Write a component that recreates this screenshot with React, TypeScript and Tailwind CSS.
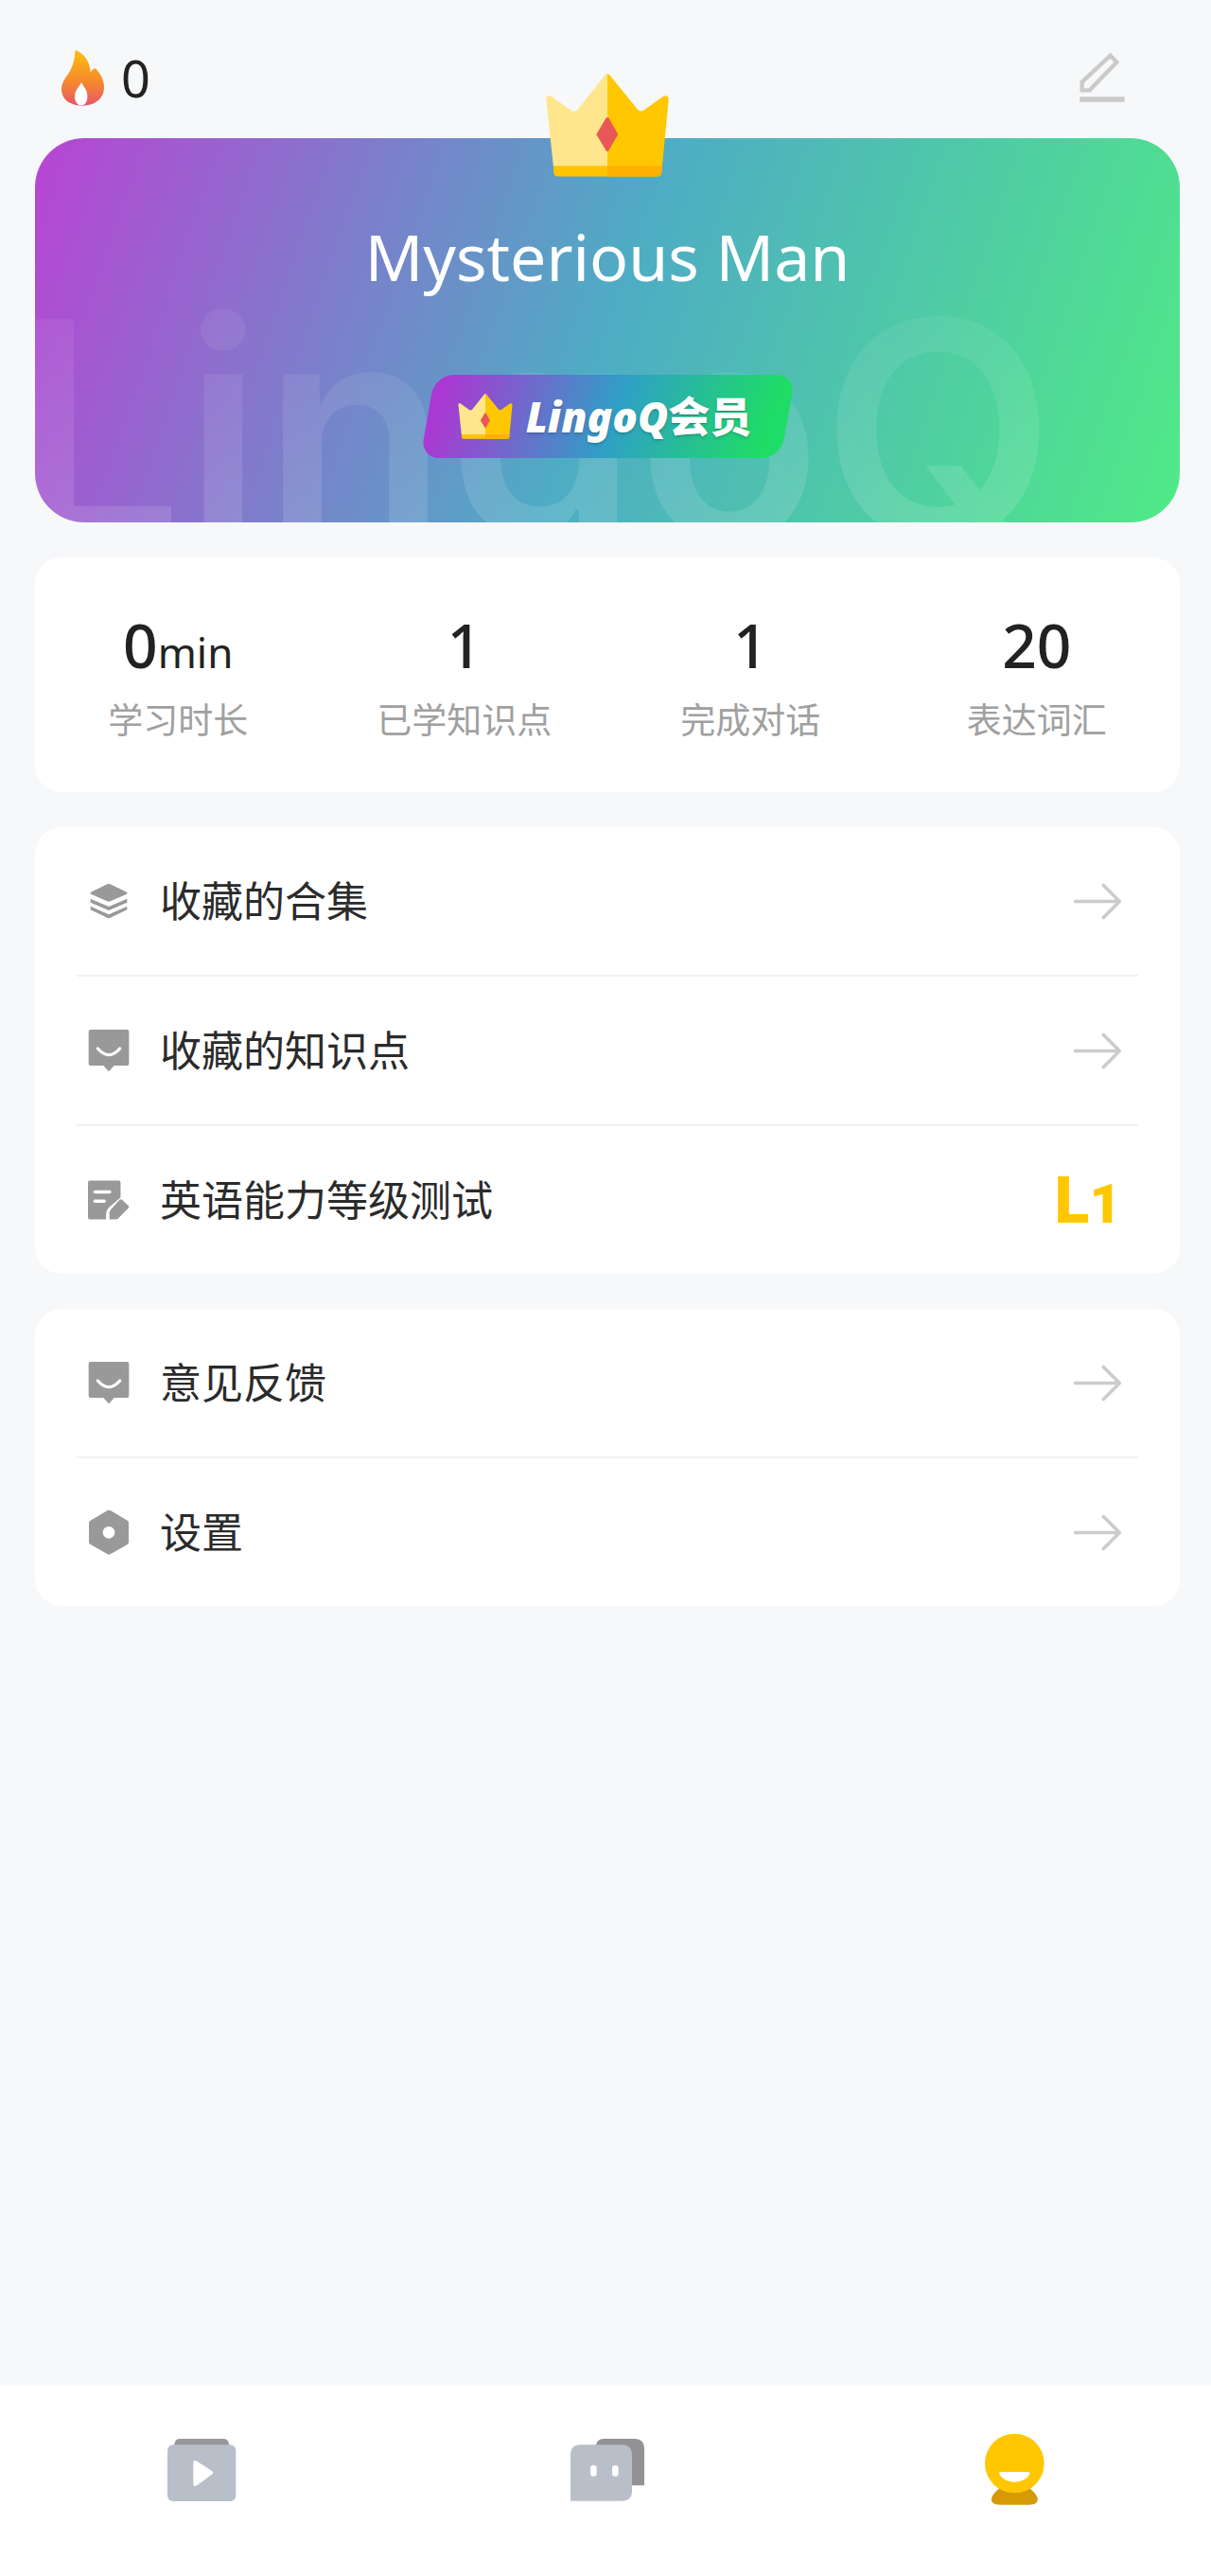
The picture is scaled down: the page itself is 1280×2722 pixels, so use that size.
import React, { useState } from 'react';

interface IconProps {
  className?: string;
}

interface Stat {
  label: string;
  value: number;
  unit?: string;
}

interface MenuItem {
  label: string;
  icon: React.FC<IconProps>;
  level?: number;
}

const FlameIcon = ({ className }: IconProps) => (
  <svg viewBox="195 66 135 177" className={className} aria-hidden="true">
    <defs>
      <linearGradient id="flame" x1="0" y1="0" x2="0" y2="1">
        <stop offset="0.1" stopColor="#fdb713" />
        <stop offset="0.55" stopColor="#f58a2c" />
        <stop offset="1" stopColor="#e8566a" />
      </linearGradient>
    </defs>
    <path
      fill="url(#flame)"
      d="M238 68Q240 65 246 68C268 80 286 104 287 136C291 129 297 124 303 124C320 142 330 162 330 184C330 220 300 242 262 242C224 242 195 224 195 190C195 165 212 150 222 132C233 112 237 92 238 68Z"
    />
    <path fill="#fff" d="M258 168C264 180 277 192 277 212C277 230 269 241 258 241C245 241 237 228 237 212C237 192 252 182 258 168Z" />
  </svg>
);

const EditIcon = ({ className }: IconProps) => (
  <svg viewBox="184 80 150 162" className={className} fill="none" aria-hidden="true">
    <path d="M285 91L305 112L219 201H195V175Z" stroke="#cacaca" strokeWidth="13" />
    <path d="M188 230H330" stroke="#cacaca" strokeWidth="16" />
  </svg>
);

const CrownIcon = ({ className }: IconProps) => (
  <svg viewBox="107 54 392 328" className={className} aria-hidden="true">
    <path
      fill="#ffc700"
      d="M303 54Q308 54 312 60L400 168Q410 177 421 168L480 126Q498 118 498 136L476 366Q475 381 462 381H303Z"
    />
    <path fill="#ffe68c" d="M303 54Q298 54 294 60L208 168Q196 179 184 168L122 124Q108 119 108 134L131 350H303Z" />
    <path fill="#ffc400" d="M131 347H303V381H146Q132 381 132 368Z" />
    <path fill="#ffb000" d="M303 347H478L476 368Q474 381 462 381H303Z" />
    <path fill="#ea5757" d="M299 194Q303 190 307 194L337 247L307 299Q303 303 299 299L268 247Z" />
  </svg>
);

const LayersIcon = ({ className }: IconProps) => (
  <svg viewBox="100 88 132 132" className={className} fill="#999" aria-hidden="true">
    <path d="M161 101Q166 99 171 101L223 126Q226 129 223 132L171 155Q166 157 161 155L109 132Q106 129 109 126Z" />
    <path d="M108 147L166 172L224 147V159L166 184L108 159Z" />
    <path d="M108 171L166 197L224 171V182L171 207Q166 210 161 207L108 182Z" />
  </svg>
);

const CommentIcon = ({ className }: IconProps) => (
  <svg viewBox="100 565 132 132" className={className} aria-hidden="true">
    <path fill="#999" d="M108 565H224Q230 565 230 571V673Q230 679 224 679H183L169 695Q166 698 163 695L149 679H108Q102 679 102 673V571Q102 565 108 565Z" />
    <path d="M131 625Q166 665 201 625" stroke="#fff" strokeWidth="10" strokeLinecap="round" fill="none" />
  </svg>
);

const TestIcon = ({ className }: IconProps) => (
  <svg viewBox="108 1036 138 132" className={className} aria-hidden="true">
    <path fill="#999" d="M114 1038H210Q216 1038 216 1044V1094L178 1126Q168 1136 168 1150V1166H114Q108 1166 108 1160V1044Q108 1038 114 1038Z" />
    <path fill="#999" d="M213 1101Q217 1098 221 1101L242 1121Q245 1125 242 1129L209 1162Q205 1166 200 1166H179V1145Q179 1138 184 1133Z" />
    <path d="M131 1075H180M131 1106H162" stroke="#fff" strokeWidth="11" strokeLinecap="round" />
  </svg>
);

const SettingsIcon = ({ className }: IconProps) => (
  <svg viewBox="99 680 132 132" className={className} overflow="visible" aria-hidden="true">
    <path
      fill="#999"
      fillRule="evenodd"
      d="M161 677Q165 675 170 677L224 709Q228 712 228 716V778Q228 782 224 785L170 816Q165 818 161 816L107 785Q102 782 102 778V716Q102 712 107 709ZM165 728A19 19 0 1 0 165 766A19 19 0 1 0 165 728Z"
    />
  </svg>
);

const ArrowIcon = ({ className }: IconProps) => (
  <svg viewBox="224 92 150 122" className={className} fill="none" aria-hidden="true">
    <path d="M229 153H368M318 102L369 153L318 204" stroke="#ccc" strokeWidth="11" strokeLinecap="round" strokeLinejoin="round" />
  </svg>
);

const VideoTabIcon = ({ className }: IconProps) => (
  <svg viewBox="98 210 246 234" className={className} aria-hidden="true">
    <path fill="#97979c" d="M152 231H290Q303 231 307 243L310 262H132L136 243Q140 231 152 231Z" />
    <rect x="113" y="250" width="217" height="179" rx="18" fill="#b9bfc9" />
    <path fill="#fff" d="M195 306Q196 298 204 301L254 333Q261 338 254 344L204 380Q196 384 195 376Z" />
  </svg>
);

const ChatTabIcon = ({ className }: IconProps) => (
  <svg viewBox="118 210 246 234" className={className} aria-hidden="true">
    <path fill="#919196" d="M236 231H332Q364 231 364 264V379H209V258Q212 231 236 231Z" />
    <path fill="#b9bfc9" d="M162 250H292Q325 250 325 283V396Q325 428 292 428H130V283Q130 250 162 250Z" />
    <rect x="193" y="315" width="20" height="35" rx="9" fill="#fff" />
    <rect x="262" y="315" width="20" height="35" rx="9" fill="#fff" />
  </svg>
);

const ProfileTabIcon = ({ className }: IconProps) => (
  <svg viewBox="78 210 246 234" className={className} aria-hidden="true">
    <path fill="#d69a04" d="M170 388H264Q282 400 290 419Q293 440 264 440H170Q141 440 144 419Q152 400 170 388Z" />
    <circle cx="217" cy="309" r="94" fill="#ffc700" />
    <path fill="#fff" d="M173 336H261Q267 336 265 342C258 358 240 368 217 368C194 368 176 358 169 342Q167 336 173 336Z" />
  </svg>
);

const stats: Stat[] = [
  { label: '学习时长', value: 0, unit: 'min' },
  { label: '已学知识点', value: 1 },
  { label: '完成对话', value: 1 },
  { label: '表达词汇', value: 20 },
];

const menuGroups: MenuItem[][] = [
  [
    { label: '收藏的合集', icon: LayersIcon },
    { label: '收藏的知识点', icon: CommentIcon },
    { label: '英语能力等级测试', icon: TestIcon, level: 1 },
  ],
  [
    { label: '意见反馈', icon: CommentIcon },
    { label: '设置', icon: SettingsIcon },
  ],
];

const tabs = [
  { id: 'video', label: '视频', icon: VideoTabIcon },
  { id: 'chat', label: '对话', icon: ChatTabIcon },
  { id: 'profile', label: '我的', icon: ProfileTabIcon },
];

const MemberBanner = () => (
  <section className="relative">
    <div className="relative flex h-[406px] flex-col items-center overflow-hidden rounded-[52px] bg-[linear-gradient(109deg,#b844d4_0%,#4eacc4_50%,#50ea86_100%)]">
      <span
        aria-hidden="true"
        className="absolute top-37 -left-6 bg-linear-to-b from-white/5 to-white/15 bg-clip-text font-['Inter',sans-serif] text-[320px] leading-[320px] font-semibold whitespace-nowrap text-transparent"
      >
        LingoQ
      </span>
      <h1 className="relative mt-20 text-[68px] leading-[90px] text-white">Mysterious Man</h1>
      <button type="button" className="relative mt-20 flex h-[88px] items-center gap-3.5 pr-[42px] pl-9">
        <span className="absolute inset-x-1 inset-y-0 -skew-x-[10deg] rounded-[20px] bg-[linear-gradient(100deg,#aa38d2_4%,#2fa0c6_52%,#1fdc66_94%)]" />
        <CrownIcon className="relative h-12 w-[58px]" />
        <span className="relative text-[44px] leading-[48px] font-black text-white text-shadow-md">
          <i>LingoQ</i>会员
        </span>
      </button>
    </div>
    <CrownIcon className="absolute -top-[68px] left-1/2 h-[109px] w-[130px] -translate-x-1/2" />
  </section>
);

const MenuRow = ({ item }: { item: MenuItem }) => {
  const Icon = item.icon;
  return (
    <li>
      <button type="button" className="flex h-[156px] w-full items-center gap-8 pr-[18px] pl-3 text-left">
        <Icon className="h-11 w-11 shrink-0" />
        <span className="flex-1 text-[44px] leading-[60px] text-[#2b2b2b]">{item.label}</span>
        {item.level ? (
          <span className="pt-1 font-['Roboto',sans-serif] text-[68px] leading-[72px] font-black text-[#ffc700]">
            L<span className="text-[58px]">{item.level}</span>
          </span>
        ) : (
          <ArrowIcon className="h-[41px] w-[50px]" />
        )}
      </button>
    </li>
  );
};

export default function App() {
  const [activeTab, setActiveTab] = useState('profile');

  return (
    <div className="flex min-h-screen flex-col bg-[#f6f8fa] font-['Noto_Sans','Noto_Sans_CJK_SC',sans-serif] text-[#222]">
      <header className="flex items-center justify-between pt-10 pr-[90px] pb-[22px] pl-[65px]">
        <div className="flex h-[84px] items-center gap-[18px]">
          <FlameIcon className="h-[59px] w-[45px]" />
          <span className="text-[54px] leading-[60px]">0</span>
        </div>
        <button type="button" aria-label="编辑资料">
          <EditIcon className="h-[54px] w-[50px]" />
        </button>
      </header>

      <main className="flex flex-1 flex-col gap-[37px] pr-[33px] pl-[37px]">
        <MemberBanner />

        <section className="grid grid-cols-4 rounded-[28px] bg-white py-12 text-center">
          {stats.map((stat) => (
            <div key={stat.label} className="flex flex-col gap-1.5">
              <p className="h-[90px] text-[64px] leading-[90px] font-medium">
                {stat.value}
                {stat.unit && <span className="text-[44px] leading-none font-normal">{stat.unit}</span>}
              </p>
              <p className="text-[37px] leading-[56px] text-[#a0a0a0]">{stat.label}</p>
            </div>
          ))}
        </section>

        {menuGroups.map((group, index) => (
          <ul key={index} className="divide-y-2 divide-[#f1f1f2] rounded-[28px] bg-white px-[44px]">
            {group.map((item) => (
              <MenuRow key={item.label} item={item} />
            ))}
          </ul>
        ))}
      </main>

      <nav className="grid grid-cols-3 bg-white pt-[50px] pb-[74px]">
        {tabs.map((tab) => {
          const Icon = tab.icon;
          return (
            <button
              key={tab.id}
              type="button"
              aria-label={tab.label}
              aria-current={activeTab === tab.id ? 'page' : undefined}
              onClick={() => setActiveTab(tab.id)}
              className="flex justify-center"
            >
              <Icon className="h-[78px] w-[82px]" />
            </button>
          );
        })}
      </nav>
    </div>
  );
}
